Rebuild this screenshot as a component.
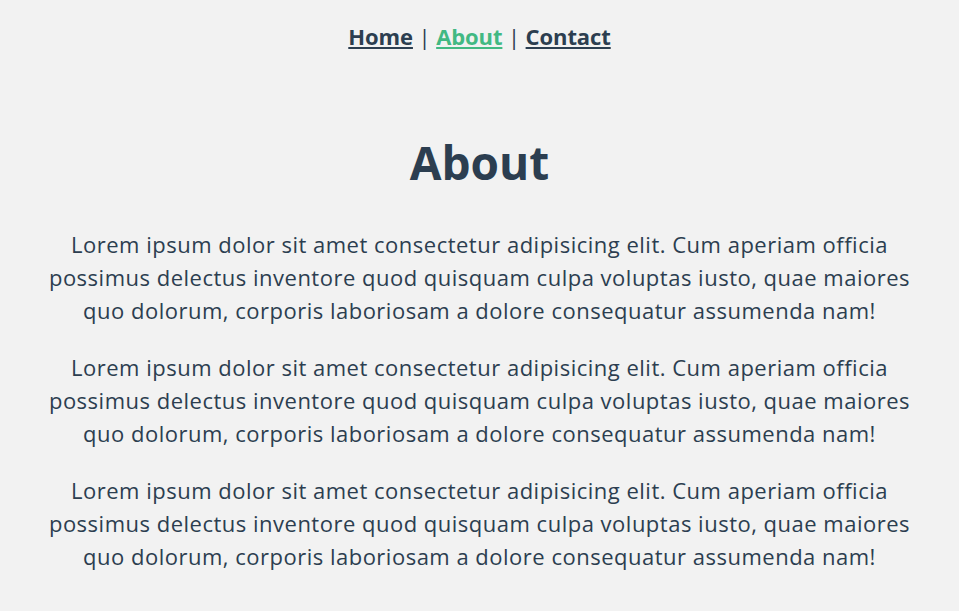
import React from "react";

const LINES = [
  "Lorem ipsum dolor sit amet consectetur adipisicing elit. Cum aperiam officia",
  "possimus delectus inventore quod quisquam culpa voluptas iusto, quae maiores",
  "quo dolorum, corporis laboriosam a dolore consequatur assumenda nam!",
];

export default function App() {
  return (
    <div className="min-h-[611px] bg-[#f2f2f2] text-center text-[#2c3e50]" style={{ fontFamily: "'Open Sans', Lato, sans-serif" }}>
      <nav className="pt-[21px] text-[22px] font-bold leading-[30px] tracking-[-0.1px]">
        <a href="#" className="underline text-[#2c3e50]">Home</a>
        <span className="font-normal"> | </span>
        <a href="#" className="underline text-[#42b983]">About</a>
        <span className="font-normal"> | </span>
        <a href="#" className="underline text-[#2c3e50]">Contact</a>
      </nav>
      <div className="mx-auto max-w-[920px]">
        <h1 className="mt-[81px] text-[46px] font-bold leading-[60px]">About</h1>
        {[0, 1, 2].map((i) => (
          <p key={i} className="mt-[24px] first-of-type:mt-[36px] text-[22px] tracking-[0.5px] leading-[33px] whitespace-nowrap">
            {LINES[0]}
            <br />
            {LINES[1]}
            <br />
            {LINES[2]}
          </p>
        ))}
      </div>
    </div>
  );
}
